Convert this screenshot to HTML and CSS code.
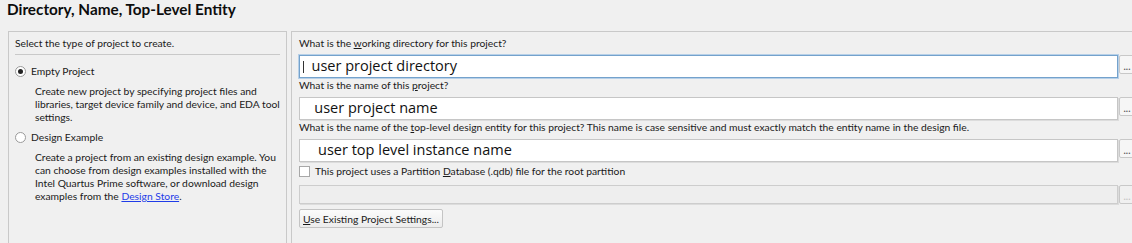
FILE: index.html
```html
<!DOCTYPE html>
<html lang="en">
    <head>
        <title>New Project Wizard</title>
        <link rel="stylesheet" href="styles.css">
    </head>
    <body>
        <h1 class="page-title">Directory, Name, Top-Level Entity</h1>
        <div class="wizard">
            <section class="type-panel">
                <p class="panel-caption">Select the type of project to create.</p>
                <div class="choice"><span class="radio checked"></span><span>Empty Project</span></div>
                <p class="choice-desc">Create new project by specifying project files and<br>libraries, target device family and device, and EDA tool<br>settings.</p>
                <div class="choice"><span class="radio"></span><span>Design Example</span></div>
                <p class="choice-desc">Create a project from an existing design example. You<br>can choose from design examples installed with the<br>Intel Quartus Prime software, or download design<br>examples from the <a href="#">Design Store</a>.</p>
            </section>
            <section class="details-panel">
                <p class="field-label">What is the <u>w</u>orking directory for this project?</p>
                <div class="field-row">
                    <div class="text-box focused"><span class="caret"></span>  user project directory</div>
                    <button class="browse">...</button>
                </div>
                <p class="field-label">What is the name of this <u>p</u>roject?</p>
                <div class="field-row">
                    <div class="text-box">   user project name</div>
                    <button class="browse">...</button>
                </div>
                <p class="field-label">What is the name of the <u>t</u>op-level design entity for this project? This name is case sensitive and must exactly match the entity name in the design file.</p>
                <div class="field-row">
                    <div class="text-box">    user top level instance name</div>
                    <button class="browse">...</button>
                </div>
                <div class="check-row"><span class="checkbox"></span><span>This project uses a Partition <u>D</u>atabase (.qdb) file for the root partition</span></div>
                <div class="field-row disabled">
                    <div class="text-box"></div>
                    <button class="browse">...</button>
                </div>
                <button class="push-button"><u>U</u>se Existing Project Settings...</button>
            </section>
        </div>
    </body>
</html>
```

FILE: styles.css
```css
body {
    margin: 0;
    height: 243px;
    overflow: hidden;
    background: #f0f0f0;
    color: #1a1a1a;
    font-family: Lato, "Open Sans", sans-serif;
    font-size: 10.3px;
}

.page-title {
    margin: 0 0 12px 7px;
    font-size: 15.3px;
    line-height: 19px;
    font-weight: 700;
    color: #0d0d0d;
}

.wizard {
    display: grid;
    grid-template-columns: 279px 1fr;
    column-gap: 4px;
    margin-left: 8px;
    margin-right: -20px;
}

.type-panel,
.details-panel {
    box-sizing: border-box;
    height: 213px;
    border: 1px solid #c9c9c9;
}

.type-panel {
    padding: 5px 6px 0 6px;
}

.details-panel {
    padding: 5px 0 0 7px;
}

p {
    margin: 0;
}

.panel-caption {
    line-height: 13px;
    padding-bottom: 4px;
    border-bottom: 1px solid #c9c9c9;
}

.choice {
    display: flex;
    align-items: center;
    gap: 5px;
    margin-top: 10px;
    line-height: 13px;
}

.choice + .choice-desc {
    margin-top: 7px;
}

.choice-desc {
    margin-left: 20px;
    line-height: 13px;
    white-space: nowrap;
}

.choice-desc + .choice {
    margin-top: 7px;
}

.choice-desc a {
    color: #1f3ce8;
}

.radio {
    box-sizing: border-box;
    width: 11px;
    height: 11px;
    border: 1px solid #9a9a9a;
    border-radius: 50%;
    background: #fff;
    display: flex;
    align-items: center;
    justify-content: center;
}

.radio.checked::after {
    content: "";
    width: 5px;
    height: 5px;
    border-radius: 50%;
    background: #222;
}

.field-label {
    line-height: 13px;
    margin-bottom: 5px;
    white-space: nowrap;
}

.field-row + .field-label {
    margin-top: 5px;
}

.field-row {
    display: grid;
    grid-template-columns: 819px 16px;
    column-gap: 1px;
    height: 19px;
}

.text-box {
    box-sizing: border-box;
    display: flex;
    align-items: center;
    padding: 0 0 2px 3px;
    background: #fff;
    border: 1px solid #c6c6c6;
    box-shadow: 1px 1px 0 #dcdcdc;
    font-family: "Open Sans", sans-serif;
    font-size: 14.5px;
    color: #111;
    white-space: pre;
}

.text-box.focused {
    border-color: #74a2cc;
    box-shadow: 0 0 0 1px #b7d0e8;
}

.caret {
    width: 1px;
    height: 12px;
    margin-top: 2px;
    background: #333;
}

.browse {
    box-sizing: border-box;
    height: 19px;
    padding: 5px 0 0 0;
    border: 1px solid #c8c8c8;
    border-radius: 2px;
    background: #f6f6f6;
    font-family: "Open Sans", sans-serif;
    font-size: 8px;
    font-weight: 700;
    color: #555;
    line-height: 8px;
}

.check-row {
    display: flex;
    align-items: center;
    gap: 5px;
    margin-top: 7px;
    line-height: 13px;
}

.checkbox {
    box-sizing: border-box;
    width: 11px;
    height: 11px;
    border: 1px solid #a8a8a8;
    background: #fff;
}

.check-row + .field-row {
    margin-top: 7px;
}

.disabled .text-box {
    background: #eeeeee;
    border-color: #cdcdcd;
}

.disabled .browse {
    color: #c4c4c4;
    background: #f0f0f0;
}

.push-button {
    display: block;
    box-sizing: border-box;
    height: 19px;
    margin-top: 5px;
    padding: 0 3px;
    border: 1px solid #c4c4c4;
    border-radius: 2px;
    background: linear-gradient(#fbfbfb, #ececec);
    font-family: Lato, "Open Sans", sans-serif;
    font-size: 10.3px;
    color: #1a1a1a;
}
```
